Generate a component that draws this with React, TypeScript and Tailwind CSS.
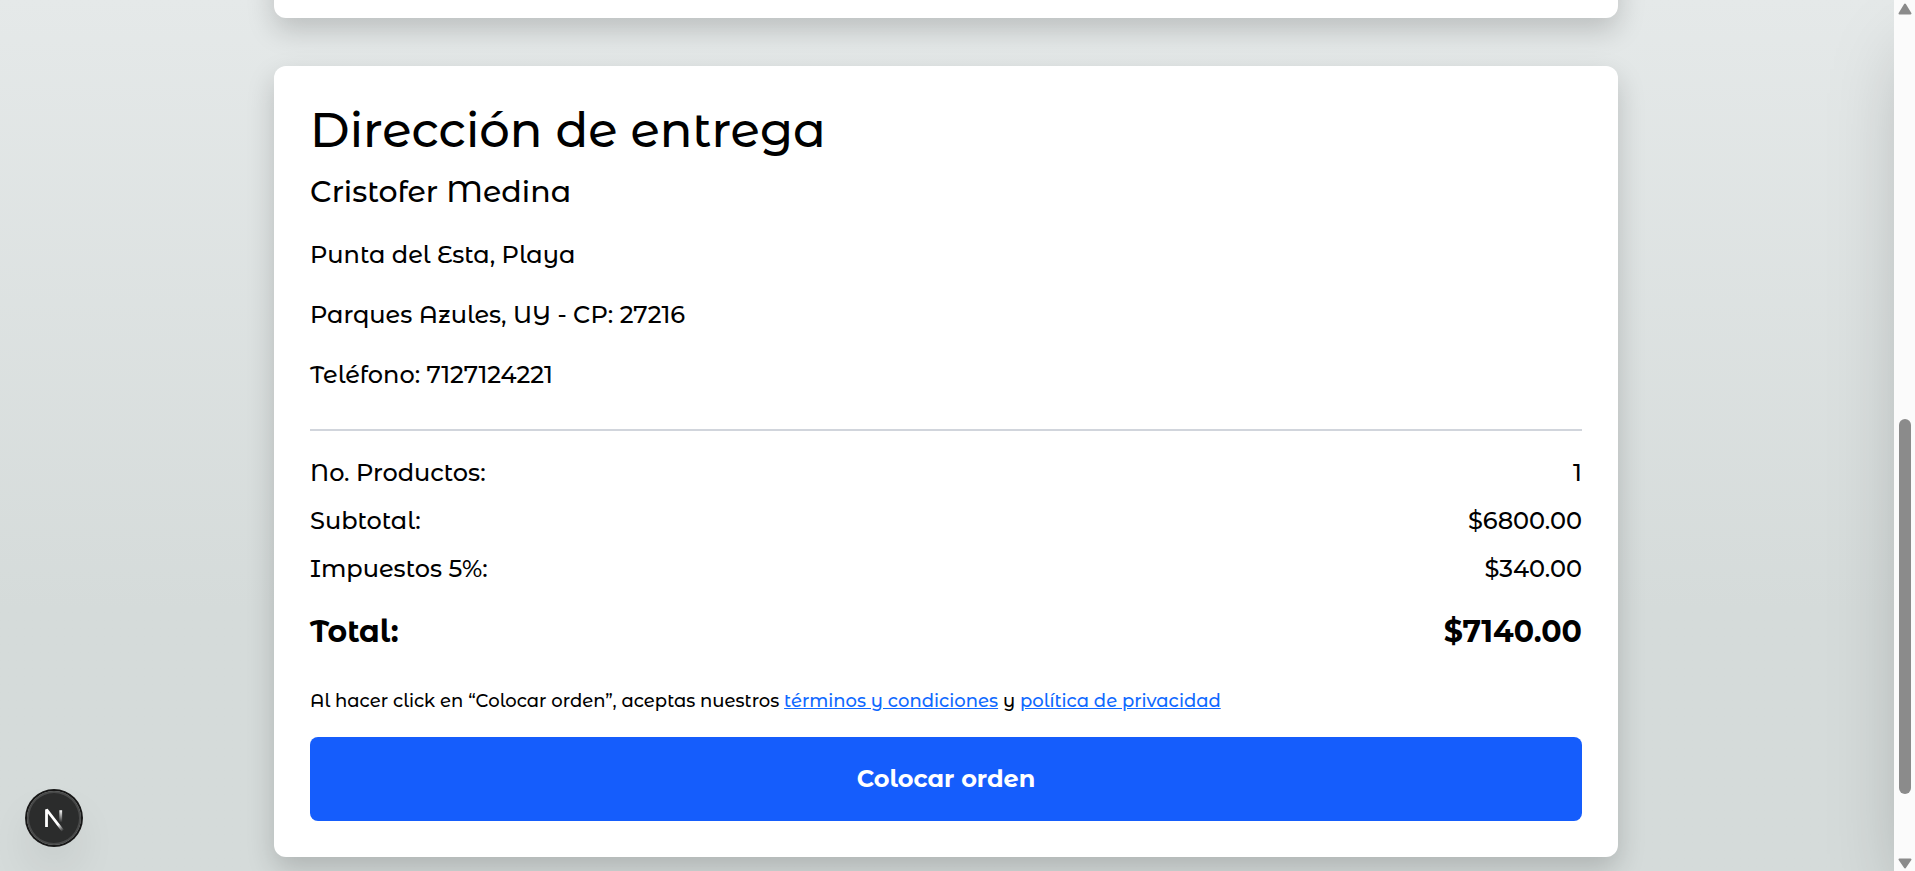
const summary = [
  { label: "No. Productos:", value: "1" },
  { label: "Subtotal:", value: "$6800.00" },
  { label: "Impuestos 5%:", value: "$340.00" },
];

const address = [
  "Punta del Esta, Playa",
  "Parques Azules, UY - CP: 27216",
  "Teléfono: 7127124221",
];

const cardShadow = "shadow-[0_12px_28px_rgba(0,0,0,0.18)]";

function DevBadge() {
  return (
    <button
      type="button"
      aria-label="Next.js"
      className="absolute bottom-[26px] left-[27px] flex size-[54px] items-center justify-center rounded-full bg-black/80 shadow-[0_0_0_2px_#171717,inset_0_0_0_2px_rgba(255,255,255,0.14),0_24px_48px_-12px_rgba(0,0,0,0.24)]"
    >
      <svg className="size-6 overflow-visible" viewBox="-0.67 -1.33 16 16" fill="none" aria-hidden="true">
        <defs>
          <linearGradient id="diag" x1="9.95" y1="11.12" x2="15.48" y2="17.97" gradientUnits="userSpaceOnUse">
            <stop stopColor="white" />
            <stop offset="0.604" stopColor="white" stopOpacity="0" />
            <stop offset="1" stopColor="white" stopOpacity="0" />
          </linearGradient>
          <linearGradient id="stem" x1="11.82" y1="1.4" x2="11.79" y2="9.63" gradientUnits="userSpaceOnUse">
            <stop stopColor="white" />
            <stop offset="1" stopColor="white" stopOpacity="0" />
          </linearGradient>
        </defs>
        <path d="M13.3 15.2 L2.34 1 V12.6" stroke="url(#diag)" strokeWidth="1.86" strokeLinejoin="bevel" />
        <path d="M11.825 1.5 V13.1" stroke="url(#stem)" strokeWidth="1.86" />
      </svg>
    </button>
  );
}

function ScrollTrack() {
  return (
    <div className="flex w-[21px] shrink-0 flex-col items-center bg-[#fbfbfb] pt-[3px] pb-0.5" aria-hidden="true">
      <svg className="h-3 w-3.5" viewBox="0 0 14 12">
        <path d="M7 1.5 L12.5 10.5 H1.5 Z" fill="#8b8b8b" stroke="#8b8b8b" strokeWidth="2" strokeLinejoin="round" />
      </svg>
      <div className="grow-404" />
      <div className="h-[375px] w-3 rounded-full bg-[#8b8b8b]" />
      <div className="grow-64" />
      <svg className="h-[11px] w-3.5" viewBox="0 0 14 11">
        <path d="M7 9.5 L12.5 1.5 H1.5 Z" fill="#8b8b8b" stroke="#8b8b8b" strokeWidth="2" strokeLinejoin="round" />
      </svg>
    </div>
  );
}

export default function App() {
  return (
    <div className="flex h-screen font-['Montserrat_Alternates',Montserrat,Inter,sans-serif] text-2xl/9 font-medium text-black">
      <div className="relative min-w-0 flex-1 overflow-hidden bg-linear-to-b from-[#e5e9e9] to-[#d5dbda] to-70% pr-0.5">
        <main className="mx-auto -mt-50 flex max-w-[1344px] flex-col gap-12">
          <section className={`h-[218px] rounded-xl bg-white ${cardShadow}`} />
          <section className={`rounded-xl bg-white p-9 ${cardShadow}`}>
            <h2 className="text-5xl/[57px]">Dirección de entrega</h2>
            <div className="mt-3 flex flex-col gap-6">
              <p className="text-3xl/[42px]">Cristofer Medina</p>
              {address.map((line) => (
                <p key={line}>{line}</p>
              ))}
            </div>
            <hr className="mt-9 mb-6 border-t-2 border-gray-300" />
            <dl className="flex flex-col gap-3">
              {summary.map((row) => (
                <div key={row.label} className="flex justify-between">
                  <dt>{row.label}</dt>
                  <dd>{row.value}</dd>
                </div>
              ))}
              <div className="mt-3 flex justify-between text-3xl/[42px] font-bold">
                <dt>Total:</dt>
                <dd>{"$7140.00"}</dd>
              </div>
            </dl>
            <p className="mt-9 text-lg/6">
              Al hacer click en “Colocar orden”, aceptas nuestros{" "}
              <a href="#terminos" className="text-[#0f69ff] underline">términos y condiciones</a>{" "}
              y <a href="#privacidad" className="text-[#0f69ff] underline">política de privacidad</a>
            </p>
            <button type="button" className="mt-6 w-full rounded-lg bg-blue-600 py-6 font-bold text-white">
              Colocar orden
            </button>
          </section>
        </main>
        <aside className="absolute inset-y-0 left-full w-[600px] shadow-[0_38px_75px_-18px_rgba(0,0,0,0.25)]" />
        <DevBadge />
      </div>
      <ScrollTrack />
    </div>
  );
}
